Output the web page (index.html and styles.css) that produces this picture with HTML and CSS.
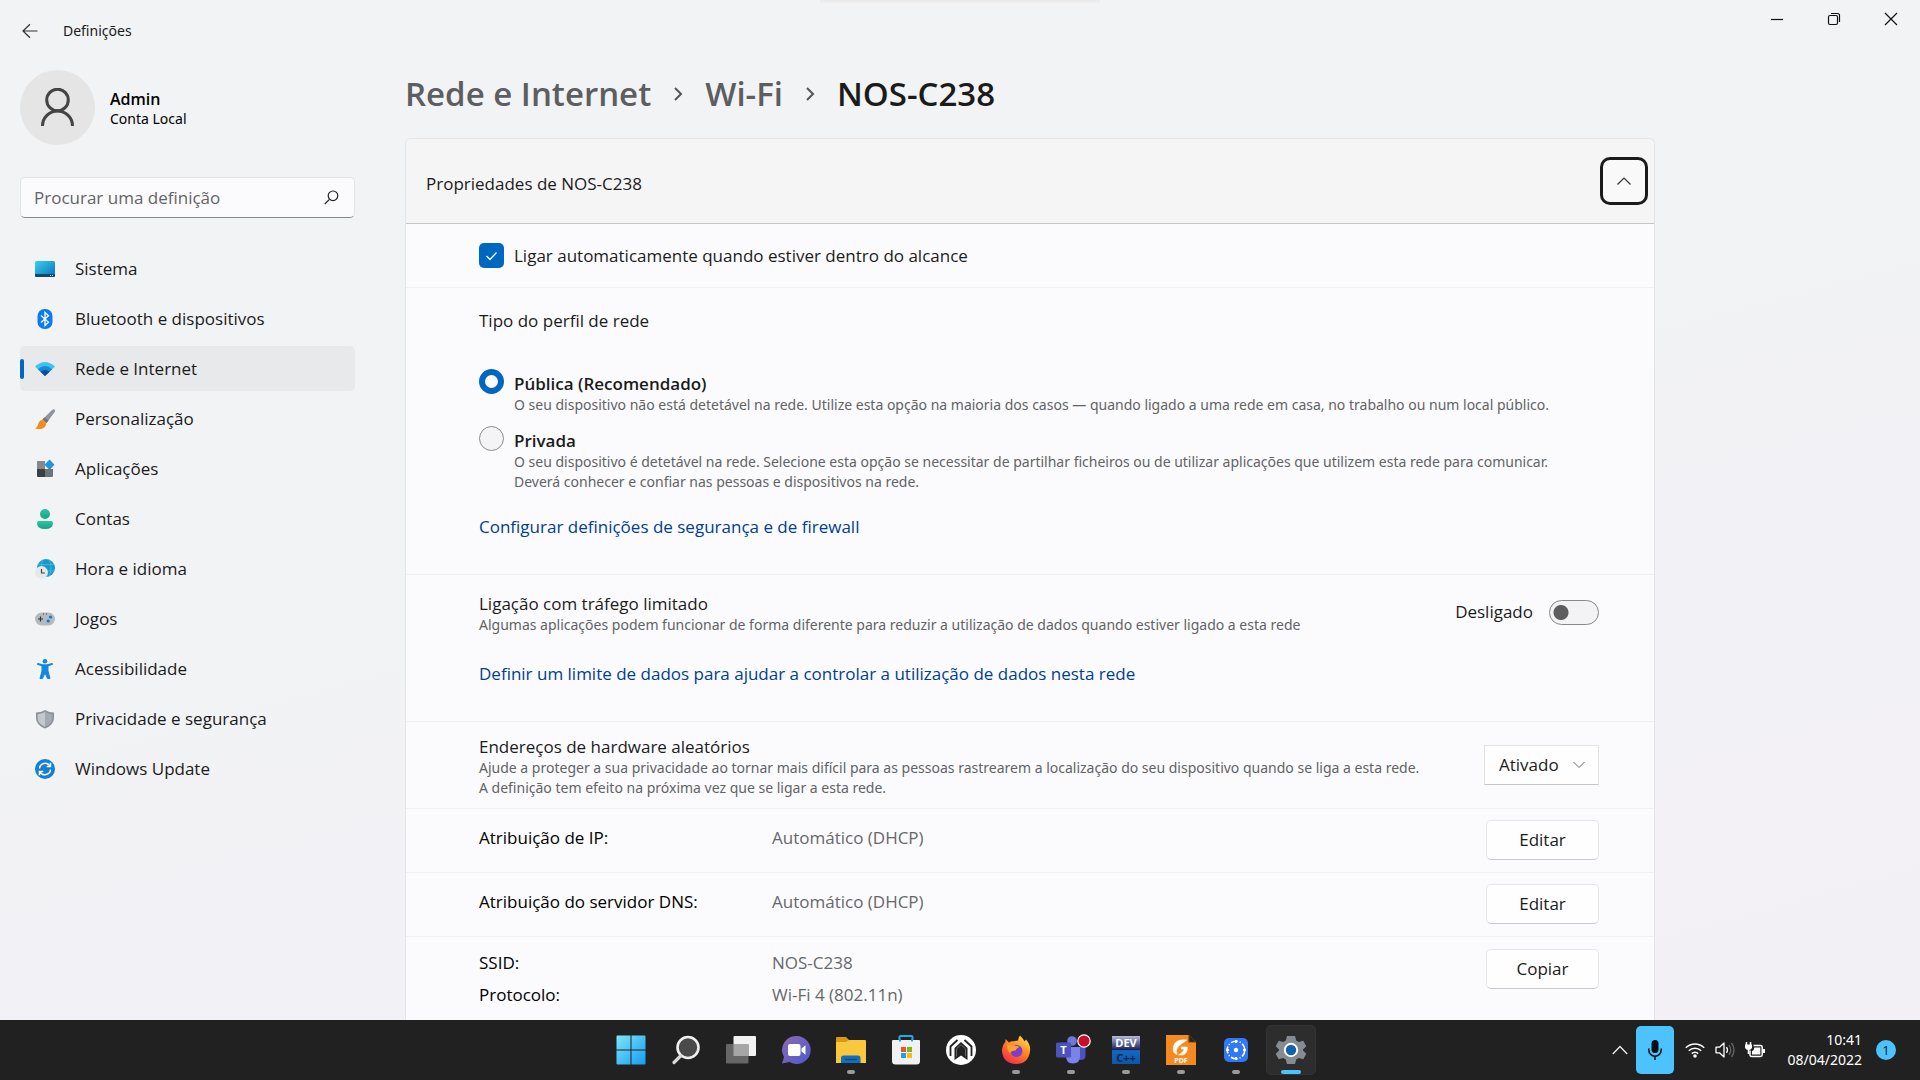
FILE: index.html
```html
<!DOCTYPE html>
<html lang="pt">
<head>
<meta charset="utf-8">
<title>Definições</title>
<link rel="stylesheet" href="styles.css">
</head>
<body>
<div class="snap-handle"></div>
<header class="titlebar">
  <div class="titlebar-left">
    <button class="back" aria-label="Voltar"><svg width="16" height="16" viewBox="0 0 16 16"><path d="M15.500 8H1M8 1.200 1 8l7 6.800" fill="none" stroke="#333" stroke-width="1.200"/></svg></button>
    <span>Definições</span>
  </div>
  <div class="caption-buttons">
    <button aria-label="Minimizar"><svg width="14" height="14" viewBox="0 0 14 14"><path d="M1 7.500h12" stroke="#111" stroke-width="1.200"/></svg></button>
    <button aria-label="Restaurar"><svg width="14" height="14" viewBox="0 0 14 14"><g fill="none" stroke="#111" stroke-width="1.200"><rect x="1.500" y="3.500" width="9" height="9" rx="1.500"/><path d="M4 1.500h6.500a2 2 0 0 1 2 2V10"/></g></svg></button>
    <button aria-label="Fechar"><svg width="14" height="14" viewBox="0 0 14 14"><path d="m1 1 12 12M13 1 1 13" stroke="#111" stroke-width="1.200"/></svg></button>
  </div>
</header>

<div class="window">
  <aside class="sidebar">
    <div class="account">
      <div class="avatar"><svg width="36" height="40" viewBox="0 0 36 40"><g fill="none" stroke="#444" stroke-width="3"><circle cx="17.500" cy="12" r="10.800"/><path d="M2.500 38a15 15 0 0 1 30 0"/></g></svg></div>
      <div class="account-text"><div class="account-name">Admin</div><div class="account-type">Conta Local</div></div>
    </div>
    <div class="search">
      <input type="search" placeholder="Procurar uma definição" aria-label="Procurar uma definição">
      <svg width="15" height="15" viewBox="0 0 15 15"><g fill="none" stroke="#222" stroke-width="1.200"><circle cx="9" cy="5.800" r="4.800"/><path d="M5.500 9.300.800 14"/></g></svg>
    </div>
    <nav class="nav">
      <a href="#sistema"><svg viewBox="0 0 20 20"><defs><linearGradient id="g-sys" x1="0" y1="0" x2="1" y2="1"><stop offset="0" stop-color="#35d3ea"/><stop offset="1" stop-color="#0f6cbd"/></linearGradient></defs><rect y="2" width="20" height="16" rx="1.500" fill="url(#g-sys)"/><path d="M0 15h20v1.500a1.500 1.500 0 0 1-1.500 1.500h-17A1.500 1.500 0 0 1 0 16.500z" fill="#0b4a70"/><path d="M15 16.500h1m1 0h1" stroke="#cfe9f5"/></svg>Sistema</a>
      <a href="#bluetooth"><svg viewBox="0 0 20 20"><rect x="2.500" width="15" height="20" rx="7" fill="#0a7cf2"/><path d="m6 6.500 7.500 6.800L10 16.500v-13l3.500 3.200L6 13.500" fill="none" stroke="#fff" stroke-width="1.300"/></svg>Bluetooth e dispositivos</a>
      <a href="#rede" class="active" aria-current="page"><svg viewBox="0 0 20 20"><path d="M0 7.500Q10-1.500 20 7.500L10 17z" fill="#3cc4ee"/><path d="M2.800 10.200Q10 3.800 17.200 10.200L10 17z" fill="#1a87d8"/><path d="M5.500 12.800Q10 9 14.500 12.800L10 17z" fill="#0c4f94"/></svg>Rede e Internet</a>
      <a href="#personalizacao"><svg viewBox="0 0 20 20"><path d="M7.500 10.500 17 1q1.500-1 2.500-.5 1 1 0 2.700L11.500 14z" fill="#8d949b"/><path d="m7.500 10.500 2-2 4 3-2 2.500z" fill="#6d747b"/><path d="M7.500 10.800Q3.500 11.500 3 16q-1 2.500-3 3.500 7 1.500 9.500-1.200 2-2.300 1.500-4.800z" fill="#f58a1f"/></svg>Personalização</a>
      <a href="#aplicacoes"><svg viewBox="0 0 20 20"><path d="M2 2h8v8H2z" fill="#85898d"/><path d="M2 10h8v8H3a1 1 0 0 1-1-1z" fill="#3c4043"/><path d="M10 10h8v7a1 1 0 0 1-1 1h-7z" fill="#6d7377"/><path d="m14.500.500 5 5.200-5 5.200-5-5.200z" fill="#1e95df"/></svg>Aplicações</a>
      <a href="#contas"><svg viewBox="0 0 20 20"><defs><linearGradient id="g-acc" x1="0" y1="0" x2="0" y2="1"><stop offset="0" stop-color="#2cc7a5"/><stop offset="1" stop-color="#1aa083"/></linearGradient></defs><circle cx="10" cy="5" r="5" fill="url(#g-acc)"/><path d="M4 12h12a2 2 0 0 1 2 2q0 6-8 6t-8-6a2 2 0 0 1 2-2z" fill="url(#g-acc)"/></svg>Contas</a>
      <a href="#hora"><svg viewBox="0 0 20 20"><circle cx="11" cy="9" r="9" fill="#1798cf"/><path d="M3 5.500h16M3 12h16M8 .500q-4 8 0 17M14 .500q4 8 0 17" fill="none" stroke="#40bfdc" stroke-width=".8"/><circle cx="6.500" cy="13.500" r="6.500" fill="#e6e8ea"/><path d="M6.500 10v4H10" fill="none" stroke="#444" stroke-width="1.200"/></svg>Hora e idioma</a>
      <a href="#jogos"><svg viewBox="0 0 20 20"><rect y="3.500" width="20" height="13" rx="6.500" fill="#b3bbc2"/><path d="M3 10h5M5.500 7.500v5" stroke="#333" stroke-width="1.200"/><path d="M8 5h1m2 0h1" stroke="#444"/><circle cx="15.500" cy="8" r="1.600" fill="#1673c8"/><circle cx="13.200" cy="12" r="1.600" fill="#1673c8"/></svg>Jogos</a>
      <a href="#acessibilidade"><svg viewBox="0 0 20 20"><circle cx="10" cy="2.300" r="2.300" fill="#1587dd"/><path d="M3 5 8 6.500h4L17 5" fill="none" stroke="#1587dd" stroke-width="2" stroke-linecap="round"/><path d="M7 6h6v6l2 7.500h-2.500L10 14l-2.500 5.500H5L7 12z" fill="#1587dd" stroke="#1587dd" stroke-linejoin="round"/></svg>Acessibilidade</a>
      <a href="#privacidade"><svg viewBox="0 0 20 20"><path d="M10 1q4 2.500 9 2.500V9q0 7-9 10.500Q1 16 1 9V3.500q5 0 9-2.500z" fill="#8c9299"/><path d="M10 3q3.500 2 7.300 2.200V9q0 5.800-7.300 8.800z" fill="#a4aab0"/><path d="M10 3v14.800Q2.700 14.800 2.700 9V5.200Q6.500 5 10 3z" fill="#c3c8cc"/></svg>Privacidade e segurança</a>
      <a href="#update"><svg viewBox="0 0 20 20"><circle cx="10" cy="10" r="10" fill="#1580d2"/><g fill="none" stroke="#fff" stroke-width="1.500"><path d="M4.500 9.500A5.600 5.600 0 0 1 15 7.200M15.500 10.500A5.600 5.600 0 0 1 5 12.800"/><path d="M15.500 3.800v3.800h-3.800M4.500 16.200v-3.800h3.800"/></g></svg>Windows Update</a>
    </nav>
  </aside>

  <main class="content">
    <h1 class="crumbs">
      <a href="#rede">Rede e Internet</a>
      <svg width="10" height="16" viewBox="0 0 10 16"><path d="m2 2 6 6-6 6" fill="none" stroke="#555" stroke-width="2"/></svg>
      <a href="#wifi">Wi-Fi</a>
      <svg width="10" height="16" viewBox="0 0 10 16"><path d="m2 2 6 6-6 6" fill="none" stroke="#555" stroke-width="2"/></svg>
      <span>NOS-C238</span>
    </h1>
    <section class="card">
      <div class="card-head">
        <h2>Propriedades de NOS-C238</h2>
        <button class="collapse" aria-label="Fechar propriedades" aria-expanded="true"><svg width="14" height="8" viewBox="0 0 14 8"><path d="m.500 7.500 6.500-6.500 6.500 6.500" fill="none" stroke="#333" stroke-width="1.200"/></svg></button>
      </div>

      <div class="row auto-connect">
        <label class="choice"><span class="check"><input type="checkbox" checked><svg width="13" height="10" viewBox="0 0 12 10"><path d="m1 5 3.500 3.500L11 1.500" fill="none" stroke="#fff" stroke-width="1.300"/></svg></span>Ligar automaticamente quando estiver dentro do alcance</label>
      </div>

      <div class="row profile">
        <h3 id="profile-title">Tipo do perfil de rede</h3>
        <div class="radios" role="radiogroup" aria-labelledby="profile-title">
          <div class="radio">
            <input type="radio" name="profile" id="public" checked>
            <div><label for="public">Pública (Recomendado)</label>
            <p>O seu dispositivo não está detetável na rede. Utilize esta opção na maioria dos casos — quando ligado a uma rede em casa, no trabalho ou num local público.</p></div>
          </div>
          <div class="radio">
            <input type="radio" name="profile" id="private">
            <div><label for="private">Privada</label>
            <p>O seu dispositivo é detetável na rede. Selecione esta opção se necessitar de partilhar ficheiros ou de utilizar aplicações que utilizem esta rede para comunicar.<br>Deverá conhecer e confiar nas pessoas e dispositivos na rede.</p></div>
          </div>
        </div>
        <a class="link" href="#firewall">Configurar definições de segurança e de firewall</a>
      </div>

      <div class="row metered">
        <div class="split">
          <div><h3>Ligação com tráfego limitado</h3>
          <p>Algumas aplicações podem funcionar de forma diferente para reduzir a utilização de dados quando estiver ligado a esta rede</p></div>
          <label class="toggle">Desligado<input type="checkbox" role="switch"></label>
        </div>
        <a class="link" href="#limite">Definir um limite de dados para ajudar a controlar a utilização de dados nesta rede</a>
      </div>

      <div class="row random split">
        <div><h3><label for="mac">Endereços de hardware aleatórios</label></h3>
        <p>Ajude a proteger a sua privacidade ao tornar mais difícil para as pessoas rastrearem a localização do seu dispositivo quando se liga a esta rede.<br>A definição tem efeito na próxima vez que se ligar a esta rede.</p></div>
        <div class="dropdown">
          <select id="mac"><option>Ativado</option></select>
          <svg width="12" height="8" viewBox="0 0 12 8"><path d="m.500 1 5.500 5.500L11.500 1" fill="none" stroke="#666"/></svg>
        </div>
      </div>

      <div class="row prop">
        <dl><dt>Atribuição de IP:</dt><dd>Automático (DHCP)</dd></dl>
        <button class="btn">Editar</button>
      </div>
      <div class="row prop">
        <dl><dt>Atribuição do servidor DNS:</dt><dd>Automático (DHCP)</dd></dl>
        <button class="btn">Editar</button>
      </div>
      <div class="row prop details">
        <dl><dt>SSID:</dt><dd>NOS-C238</dd><dt>Protocolo:</dt><dd>Wi-Fi 4 (802.11n)</dd></dl>
        <button class="btn">Copiar</button>
      </div>
    </section>
  </main>
</div>

<footer class="taskbar">
  <div class="apps">
    <button aria-label="Iniciar"><svg viewBox="0 0 30 30"><defs><linearGradient id="g-win" x1="0" y1="0" x2="1" y2="1"><stop offset="0" stop-color="#7fe6fb"/><stop offset="1" stop-color="#149bf0"/></linearGradient></defs><path d="M.500 1.500a1 1 0 0 1 1-1h13v14h-14zM15.500.500h13a1 1 0 0 1 1 1v13h-14zM.500 15.500h14v14h-13a1 1 0 0 1-1-1zM15.500 15.500h14v13a1 1 0 0 1-1 1h-13z" fill="url(#g-win)"/></svg></button>
    <button aria-label="Procurar"><svg viewBox="0 0 30 30"><circle cx="17" cy="12.500" r="10.500" fill="#4a4a4a" stroke="#f0f0f0" stroke-width="2.600"/><path d="m9.500 21-6.500 6.500" stroke="#d8d8d8" stroke-width="3.200" stroke-linecap="round"/></svg></button>
    <button aria-label="Vista de tarefas"><svg viewBox="0 0 30 30"><rect x="7.500" y="1" width="22.500" height="20" rx="1" fill="#f2f2f2"/><rect x="0" y="9" width="22.500" height="19.500" rx="1" fill="#666"/><path d="M7.500 9h15v12h-15z" fill="#a6a6a6"/></svg></button>
    <button aria-label="Chat"><svg viewBox="0 0 30 30"><defs><linearGradient id="g-chat" x1="0" y1="0" x2="1" y2="1"><stop offset="0" stop-color="#8a6bb0"/><stop offset="1" stop-color="#4f59cc"/></linearGradient></defs><path d="M15.500 1a14 14 0 1 1-7 26L1 28.500 3 22A14 14 0 0 1 15.500 1z" fill="url(#g-chat)"/><rect x="7" y="9" width="12.500" height="12" rx="2" fill="#fff"/><path d="m20.500 13.500 4-3.200v9.400l-4-3.200z" fill="#fff"/></svg></button>
    <button class="running" aria-label="Explorador de Ficheiros"><svg viewBox="0 0 30 30"><path d="M0 3a1 1 0 0 1 1-1h9l3 3v7H0z" fill="#d99a12"/><path d="M0 7h10l3-2h16a1 1 0 0 1 1 1v22H0z" fill="#fbc73c"/><path d="M5 28v-5q0-2.500 2.500-2.500h14.500q2.500 0 2.500 2.500v5z" fill="#1070bd"/><path d="M9 24.500h12" stroke="#0a4c86" stroke-width="1.500"/></svg></button>
    <button aria-label="Microsoft Store"><svg viewBox="0 0 30 30"><path d="M8.500 6V2q0-1 1-1h11q1 0 1 1v4" fill="none" stroke="#27a7e6" stroke-width="2"/><path d="M2 5h26a1 1 0 0 1 1 1v20q0 3.500-3.500 3.500h-21Q1 29.500 1 26V6a1 1 0 0 1 1-1z" fill="#f1f1f1"/><path d="M8 5.500h2M20 5.500h2" stroke="#27a7e6" stroke-width="2"/><path d="M10 12h5v5h-5z" fill="#f0512b"/><path d="M16 12h5v5h-5z" fill="#7cb913"/><path d="M10 18h5v5h-5z" fill="#18a4ec"/><path d="M16 18h5v5h-5z" fill="#fbb911"/></svg></button>
    <button aria-label="Aplicação"><svg viewBox="0 0 30 30"><circle cx="15" cy="15" r="15" fill="#fff"/><path d="M4.500 21V11.500L11.500 5M25.500 21V11.500L18.500 5" fill="none" stroke="#222" stroke-width="1.800"/><path d="M8.500 25V13L15 7l6.500 6v12L15 20.500z" fill="#222"/><path d="M10.500 21.500v-7.700L15 9.700l4.500 4.100v7.700" fill="none" stroke="#777" stroke-width=".8"/></svg></button>
    <button class="running" aria-label="Firefox"><svg viewBox="0 0 30 30"><defs><linearGradient id="g-ff" x1=".8" y1="0" x2=".2" y2="1"><stop offset="0" stop-color="#ffe14a"/><stop offset=".5" stop-color="#ff7b22"/><stop offset="1" stop-color="#f2264f"/></linearGradient></defs><path d="M19 .500q3 3 4.500 6l1.500-2q5 5.500 4 12Q27 29 15 29 2 28.500 1 16q0-5 3.500-9.500V4L8 7.500q2-1.500 4.500-1.200L17 5.500q.5-3 2-5z" fill="url(#g-ff)"/><circle cx="15.500" cy="16" r="6" fill="#7a3fd0"/><path d="M6 10q5-1.500 8.500 1 3-.500 3.500 1.300-3 1.200-3.500 3.200-4.500 0-5.500 3-3-3-3-8.500z" fill="#ffa02d"/></svg></button>
    <button class="running" aria-label="Teams"><svg viewBox="0 0 30 30"><circle cx="16" cy="6" r="4.800" fill="#6f78da"/><path d="M20 12h9.500v9q0 4-5 4H20z" fill="#4b53bc"/><path d="M11 12h13v9q0 7.500-7 7.500t-7-7.500z" fill="#7b83eb"/><rect y="7.500" width="15" height="15" rx="1.500" fill="#4b53bc"/><text x="7.500" y="19" text-anchor="middle" class="glyph" font-size="11">T</text><circle cx="28" cy="6" r="6.200" fill="#c50f2b" stroke="#fff" stroke-width="1.200"/></svg></button>
    <button class="running" aria-label="Dev-C++"><svg viewBox="0 0 30 30"><defs><linearGradient id="g-dev" x1="0" y1="0" x2="0" y2="1"><stop offset="0" stop-color="#b9b8dc"/><stop offset=".5" stop-color="#141d5c"/><stop offset=".52" stop-color="#1668bd"/><stop offset="1" stop-color="#0c56a8"/></linearGradient></defs><path d="M1 1h28v28H1z" fill="url(#g-dev)"/><text x="15" y="12" text-anchor="middle" class="glyph" font-size="11">DEV</text><text x="15" y="27" text-anchor="middle" class="glyph dark" font-size="11">C++</text></svg></button>
    <button class="running" aria-label="Foxit PDF"><svg viewBox="0 0 30 30"><path d="M0 0h23l7 7v23H0z" fill="#f58a20"/><path d="M23 0v7h7" fill="#222" stroke="#7a3f0c" stroke-width="1.200"/><path d="M21 5q-11-1.500-13.500 6-1.500 7 3.500 8.500-2-5 1.500-8 3.500-3.500 8.500-6.500zM12.500 19.800q6.500 1.500 8.500-4 .5-2 .3-3.800h-6v2h3q-1 3.800-5.800 5.800z" fill="#fff" stroke="#fff" stroke-width=".6"/><text x="15" y="28" text-anchor="middle" class="glyph" font-size="7">PDF</text></svg></button>
    <button class="running" aria-label="Aplicação"><svg viewBox="0 0 30 30"><rect x="3" y="3" width="24" height="24" rx="5" fill="#3178f6"/><circle cx="15" cy="15" r="8.800" fill="none" stroke="#fff" stroke-width="1.600" stroke-dasharray="7 2 1 2"/><circle cx="15" cy="15" r="2.200" fill="#fff"/><path d="M15 5v3M15 22v3M5 15h3M22 15h3" stroke="#fff" stroke-width="2"/></svg></button>
    <button class="running current" aria-label="Definições"><svg viewBox="0 0 30 30"><path d="M11 1h8l1.200 4.500 2.600 1.500 4.500-1.200 3 5.400L27 14.500v1l3.300 3.300-3 5.400-4.500-1.200-2.600 1.500L19 29h-8l-1.200-4.500L7.200 23l-4.500 1.200-3-5.400L3 15.500v-1l-3.300-3.300 3-5.400L7.200 7l2.600-1.500z" fill="#858b91" stroke-linejoin="round"/><circle cx="15" cy="15" r="6.200" fill="#0f62ad" stroke="#fff" stroke-width="2"/></svg></button>
  </div>
  <div class="tray">
    <button class="more" aria-label="Mostrar ícones ocultos"><svg width="16" height="10" viewBox="0 0 16 10"><path d="m.800 9 7.200-7.500L15.200 9" fill="none" stroke="#eee" stroke-width="1.300"/></svg></button>
    <button class="mic" aria-label="Microfone"><svg width="16" height="22" viewBox="0 0 16 22"><rect x="4.500" y="1" width="7" height="13" rx="3.500" fill="#0a0f14"/><path d="M1.800 9.500v1.500a6.200 6.200 0 0 0 12.400 0V9.500M8 17.300V21" fill="none" stroke="#0a0f14" stroke-width="1.500"/></svg></button>
    <svg width="20" height="16" viewBox="0 0 20 16"><g fill="none" stroke="#fff" stroke-width="1.500"><path d="M.800 5.800a13 13 0 0 1 18.400 0M3.800 8.800a8.700 8.700 0 0 1 12.400 0M6.800 11.600a4.500 4.500 0 0 1 6.400 0"/></g><circle cx="10" cy="14" r="1.800" fill="#fff"/></svg>
    <svg width="20" height="18" viewBox="0 0 20 18"><g fill="none" stroke="#fff" stroke-width="1.300"><path d="M1 6.200h3.500L9 2v14l-4.500-4.200H1z" stroke-linejoin="round"/><path d="M11.500 6.200q2 2.800 0 5.600"/><path d="M14 4q3.500 5 0 10M16.500 2q5 7 0 14" stroke="#666"/></g></svg>
    <svg width="20" height="18" viewBox="0 0 20 18"><path d="M8.500 4.500h7q1.700 0 1.700 1.700v7.600q0 1.700-1.700 1.700H6.700Q5 15.500 5 13.800V9.500" fill="none" stroke="#fff" stroke-width="1.500"/><path d="M9.300 6.500h6v7H7v-3.200Q9.300 9 9.300 6.500zM18 8h2v4h-2z" fill="#fff"/><path d="M1.500 1v3.500M5.500 1v3.500M3.500 8v5" fill="none" stroke="#fff" stroke-width="1.500"/><path d="M0 3.500h7v3.200q-.8 2.300-3.500 2.300T0 6.700z" fill="#fff"/></svg>
    <div class="clock"><div>10:41</div><div>08/04/2022</div></div>
    <div class="badge">1</div>
  </div>
</footer>
</body>
</html>
```
FILE: styles.css
```css
* { box-sizing: border-box; }
body {
  margin: 0;
  height: 100vh;
  display: flex;
  flex-direction: column;
  overflow: hidden;
  background: linear-gradient(165deg, #f1f3f5 0%, #f2f3f5 45%, #f2f1f6 70%, #f3f0f5 100%);
  color: #1b1b1b;
  font: 17px/22px "Open Sans", "Noto Sans", sans-serif;
}
h1, h2, h3, p, dl, dd { margin: 0; font: inherit; }
button { border: 0; padding: 0; background: none; font: inherit; color: inherit; }
a { color: inherit; text-decoration: none; }

.snap-handle {
  position: absolute;
  top: 0;
  left: 50%;
  width: 280px;
  height: 4px;
  margin-left: -140px;
  background: linear-gradient(#e9e9ea, #f2f2f3);
}

/* Title bar */
.titlebar { display: flex; justify-content: space-between; align-items: flex-start; height: 62px; flex: none; }
.titlebar-left { display: flex; align-items: center; gap: 25px; height: 62px; padding-left: 22px; font-family: "Noto Sans", sans-serif; font-size: 14px; }
.back { display: flex; }
.caption-buttons { display: flex; padding-right: 1px; }
.caption-buttons button { width: 57px; height: 38px; display: grid; place-items: center; }

.window { display: flex; flex: 1; min-height: 0; }

/* Sidebar */
.sidebar { width: 405px; flex: none; padding: 8px 50px 0 20px; }
.account { display: flex; align-items: center; gap: 15px; }
.account-text { padding-top: 2px; }
.avatar { width: 75px; height: 75px; border-radius: 50%; background: #e5e5e5; display: grid; place-items: center; }
.account-name { font-size: 16px; font-weight: 600; line-height: 20px; color: #000; }
.account-type { font-family: "Noto Sans", sans-serif; font-size: 14px; line-height: 20px; color: #000; }
.search {
  display: flex;
  align-items: center;
  height: 41px;
  margin-top: 32px;
  padding: 0 15px 0 13px;
  border: 1px solid #e2e3e5;
  border-bottom-color: #868789;
  border-radius: 5px;
  background: #fbfbfd;
}
.search input { flex: 1; min-width: 0; border: 0; padding: 0; outline: 0; background: none; font: inherit; color: #1b1b1b; }
.search input::placeholder { color: #636466; opacity: 1; }
.nav { display: grid; gap: 5px; margin-top: 28px; }
.nav a { display: flex; align-items: center; gap: 20px; height: 45px; padding: 1px 0 0 15px; border-radius: 5px; position: relative; }
.nav svg { width: 20px; height: 20px; }
.nav .active { background: #e8e9eb; }
.nav .active::before { content: ""; position: absolute; left: 0; top: 13px; width: 4px; height: 20px; border-radius: 2px; background: #0067c0; }

/* Content */
.content { flex: 1; min-width: 0; display: flex; flex-direction: column; padding: 8px 16px 0 0; }
.crumbs { display: flex; align-items: center; gap: 22px; height: 48px; font-size: 33px; font-weight: 600; line-height: 48px; }
.crumbs a { color: #5d5e60; }
.card {
  flex: 1;
  max-width: 1250px;
  margin-top: 20px;
  border: 1px solid #e3e4e6;
  border-bottom: 0;
  border-radius: 6px 6px 0 0;
  background: #fbfbfd;
}
.card-head {
  display: flex;
  align-items: center;
  justify-content: space-between;
  height: 85px;
  padding: 0 6px 0 20px;
  border-bottom: 1px solid #c5c6c8;
  border-radius: 6px 6px 0 0;
  background: #f5f5f6;
}
.card-head h2 { padding-top: 5px; }
.collapse { width: 48px; height: 48px; border: 3px solid #1b1b1b; border-radius: 10px; background: #f9f9fa; display: grid; place-items: center; }
.row { padding: 0 55px 0 73px; border-bottom: 1px solid #f0f0f2; }
.row p { font-family: "Noto Sans", sans-serif; font-size: 14px; line-height: 20px; color: #626365; }
.split { display: flex; justify-content: space-between; }
.link { display: inline-block; color: #003e92; }

.auto-connect { padding-top: 19px; padding-bottom: 19px; }
.choice { display: flex; align-items: center; gap: 10px; height: 25px; }
.check { display: grid; place-items: center; }
.check > * { grid-area: 1 / 1; }
.check input { appearance: none; width: 25px; height: 25px; margin: 0; border-radius: 5px; background: #0067c0; }

.profile { padding-top: 22px; padding-bottom: 36px; }
.radios { display: grid; gap: 15px; margin: 41px 0 24px; }
.radio { display: flex; gap: 10px; margin-right: -40px; }
.radio label { display: block; font-weight: 600; }
.radio input { appearance: none; flex: none; width: 25px; height: 25px; margin: -4px 0 0; border: 1px solid #8b8c8e; border-radius: 50%; background: #f4f4f6; }
.radio input:checked { border: 6px solid #0067c0; background: #fff; }

.metered { padding-top: 18px; padding-bottom: 36px; }
.metered .link { margin-top: 28px; display: block; }
.toggle { display: flex; align-items: center; gap: 16px; height: 42px; margin-top: -2px; }
.toggle input {
  appearance: none;
  width: 50px;
  height: 25px;
  margin: 0;
  border: 1px solid #868789;
  border-radius: 13px;
  background: radial-gradient(circle at 11px 50%, #5d5d5f 7px, #f3f3f5 8px);
}

.random { padding-top: 14px; padding-bottom: 10px; }
.dropdown { display: grid; align-items: center; height: 40px; margin-top: 9px; }
.dropdown > * { grid-area: 1 / 1; }
.dropdown svg { justify-self: end; margin-right: 14px; }
.dropdown select { appearance: none; width: 115px; height: 40px; padding: 0 14px; border: 1px solid #e2e2e4; border-bottom-color: #c6c6c8; border-radius: 0; background: #fefefe; font: inherit; color: inherit; }

.prop { display: flex; justify-content: space-between; padding-top: 11px; padding-bottom: 12px; }
.prop dl { display: grid; grid-template-columns: 293px auto; row-gap: 10px; padding-top: 7px; align-content: start; }
.prop dt { color: #000; }
.prop dd { color: #67686a; }
.details { padding-top: 12px; border-bottom: 0; }
.details dl { padding-top: 3px; }
.btn { width: 113px; height: 40px; border: 1px solid #e6e6e8; border-bottom-color: #c9c9cb; border-radius: 5px; background: #fefefe; }

/* Taskbar */
.taskbar { flex: none; display: grid; grid-template-columns: 1fr auto 1fr; align-items: center; height: 60px; padding-left: 2px; background: #212121; color: #fff; }
.apps { grid-column: 2; display: flex; gap: 5px; }
.apps button { position: relative; display: grid; place-items: center; width: 50px; height: 50px; border-radius: 5px; }
.apps svg { width: 30px; height: 30px; overflow: visible; }
.apps .current { background: #2d2d2d; border: 1px solid #343434; }
.running::after { content: ""; position: absolute; bottom: 1px; left: 50%; width: 8px; height: 4px; margin-left: -4px; border-radius: 2px; background: #9a9a9a; }
.current::after { bottom: 0; width: 20px; margin-left: -10px; background: #4cc2ff; }
.glyph { fill: #fff; font-family: "Open Sans", sans-serif; font-weight: 700; }
.glyph.dark { fill: #06264f; }
.tray { display: flex; align-items: center; justify-content: flex-end; gap: 10px; padding-right: 24px; }
.more { display: flex; }
.mic { width: 38px; height: 48px; margin: 0 1px 0 -2px; border-radius: 5px; background: #4cc2ff; display: grid; place-items: center; }
.clock { width: 87px; text-align: right; font-family: "Noto Sans", sans-serif; font-size: 14px; line-height: 20px; }
.badge { width: 20px; height: 20px; margin-left: 4px; border-radius: 50%; background: #4cc2ff; color: #10202c; font-size: 13px; line-height: 20px; text-align: center; }
```
